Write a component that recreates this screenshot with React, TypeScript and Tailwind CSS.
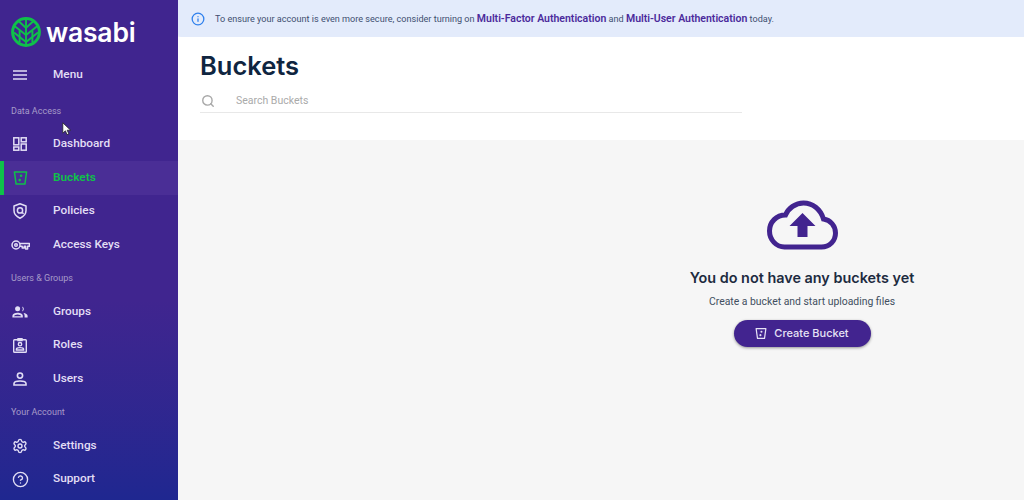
import { HelpCircle, Info, Search, Settings } from "lucide-react";

const sans = "font-['Roboto',sans-serif]";
const display = "font-['Inter',sans-serif]";

function Logo() {
  return (
    <svg viewBox="0 0 30 30" className="h-[30px] w-[30px] shrink-0">
      <circle cx="15" cy="15" r="13.4" fill="none" stroke="#0fc14a" strokeWidth="3" />
      <g fill="none" stroke="#0fc14a" strokeWidth="1.9">
        <path d="M15 3v24" />
        <path d="M8 4.5l7 6.5 7-6.5" />
        <path d="M3.5 9l11.5 9 11.5-9" />
        <path d="M3 15.5l12 9.5 12-9.5" />
        <path d="M8.6 13.5v12M21.4 13.5v12" />
      </g>
    </svg>
  );
}

function BucketIcon({ className }: { className?: string }) {
  return (
    <svg viewBox="0 0 16 16" fill="none" stroke="currentColor" strokeWidth="1.6" className={className}>
      <path d="M1.5 1.5h13l-1.8 13H3.3z" strokeLinejoin="round" />
      <circle cx="8.6" cy="5.6" r="1.4" fill="currentColor" stroke="none" />
      <circle cx="7.2" cy="10.2" r="1.4" fill="currentColor" stroke="none" />
    </svg>
  );
}

function MenuIcon() {
  return (
    <svg viewBox="0 0 14 10" className="h-[10px] w-[14px]" fill="none" stroke="currentColor" strokeWidth="1.4">
      <path d="M0 1h14M0 5h14M0 9h14" />
    </svg>
  );
}

function DashIcon() {
  return (
    <svg viewBox="0 0 14 14" className="h-[14px] w-[14px]" fill="none" stroke="currentColor" strokeWidth="1.5">
      <rect x="0.8" y="0.8" width="5" height="7" />
      <rect x="8.2" y="0.8" width="5" height="4" />
      <rect x="0.8" y="10" width="5" height="3.2" />
      <rect x="8.2" y="7" width="5" height="6.2" />
    </svg>
  );
}

function ShieldIcon() {
  return (
    <svg viewBox="0 0 14 16" className="h-[16px] w-[14px]" fill="none" stroke="currentColor" strokeWidth="1.5">
      <path d="M7 .8l6 2.2v4.6c0 3.6-2.6 6.2-6 7.6-3.4-1.4-6-4-6-7.6V3z" strokeLinejoin="round" />
      <circle cx="7" cy="7.4" r="2.6" />
      <path d="M9 9.4l1.6 1.4" />
    </svg>
  );
}

function KeyIcon() {
  return (
    <svg viewBox="0 0 19 10" className="h-[10px] w-[19px]" fill="none" stroke="currentColor" strokeWidth="1.5">
      <circle cx="5" cy="5" r="4" />
      <circle cx="5" cy="5" r="1.3" />
      <path d="M9 3.6h9.4v2.6h-1.8V9h-2V6.2h-1.4V8h-2V6.2H9" strokeLinejoin="round" />
    </svg>
  );
}

function GroupIcon() {
  return (
    <svg viewBox="0 0 16 12" className="h-[12px] w-[16px]" fill="currentColor">
      <circle cx="5.6" cy="2.8" r="2.5" />
      <path d="M.4 11.6V9.8c0-2 2.6-3 5.2-3s5.2 1 5.2 3v1.8zM2 10.2h7.2c-.3-1-2-1.8-3.6-1.8S2.3 9.2 2 10.2z" fillRule="evenodd" />
      <path d="M10 .4a2.6 2.6 0 0 1 0 5A4.2 4.2 0 0 0 10 .4z" />
      <path d="M11.4 6.9c2.2.3 4.2 1.2 4.2 2.9v1.8h-3V9.8c0-1.2-.5-2.2-1.2-2.9z" />
    </svg>
  );
}

function RoleIcon() {
  return (
    <svg viewBox="0 0 14 15" className="h-[15px] w-[14px]" fill="none" stroke="currentColor" strokeWidth="1.4">
      <rect x="0.7" y="1.8" width="12.6" height="12.5" rx="0.8" />
      <path d="M5 .6h4v2H5z" fill="currentColor" />
      <circle cx="7" cy="6.2" r="1.7" />
      <path d="M3.4 12v-.8c0-1 1.6-1.6 3.6-1.6s3.6.6 3.6 1.6v.8z" />
    </svg>
  );
}

function UserIcon() {
  return (
    <svg viewBox="0 0 14 14" className="h-[14px] w-[14px]" fill="none" stroke="currentColor" strokeWidth="1.6">
      <circle cx="7" cy="3.6" r="2.6" />
      <path d="M1 13v-1.4C1 9.8 3.8 9 7 9s6 .8 6 2.6V13z" />
    </svg>
  );
}

function Cursor() {
  return (
    <svg viewBox="0 0 10 14" className="absolute left-[62px] top-[122px] h-[14px] w-[10px]">
      <path d="M.8.8v10.4l2.6-2.4 1.6 3.8 1.8-.8-1.6-3.6h3.4z" fill="#fff" stroke="#222" strokeWidth="0.8" />
    </svg>
  );
}

function Row({ icon, label, active }: { icon: React.ReactNode; label: string; active?: boolean }) {
  return (
    <div
      className={`flex h-[33.5px] items-center border-l-[4px] text-[11.8px] font-medium ${
        active ? "border-[#0fc14a] bg-[#4a2e96] font-semibold text-[#0fc14a]" : "border-transparent text-[#e2def5]"
      }`}
    >
      <span className="flex w-[49px] justify-center pr-[17px]">{icon}</span>
      <span>{label}</span>
    </div>
  );
}

function Label({ text }: { text: string }) {
  return (
    <div className="flex h-[33.5px] items-center pl-[11px] pt-[1px] text-[9px] text-[#a79cc9]">{text}</div>
  );
}

export default function App() {
  return (
    <div className={`relative flex h-[500px] w-[1024px] overflow-hidden bg-[#f6f6f6] ${sans}`}>
      <aside className="flex w-[178px] shrink-0 flex-col bg-gradient-to-b from-[#40258f] from-60% to-[#1f2790]">
        <div className="flex h-[58.5px] items-center gap-[5px] pl-[11px] pt-[6px]">
          <Logo />
          <span className={`text-[26.5px] font-semibold leading-none tracking-[-0.2px] text-white ${display}`}>wasabi</span>
        </div>
        <Row icon={<MenuIcon />} label="Menu" />
        <div className="h-[2px]" />
        <Label text="Data Access" />
        <Row icon={<DashIcon />} label="Dashboard" />
        <Row icon={<BucketIcon className="h-[16px] w-[15px]" />} label="Buckets" active />
        <Row icon={<ShieldIcon />} label="Policies" />
        <Row icon={<KeyIcon />} label="Access Keys" />
        <Label text="Users & Groups" />
        <Row icon={<GroupIcon />} label="Groups" />
        <Row icon={<RoleIcon />} label="Roles" />
        <Row icon={<UserIcon />} label="Users" />
        <Label text="Your Account" />
        <Row icon={<Settings size={16} strokeWidth={2.1} />} label="Settings" />
        <Row icon={<HelpCircle size={17} strokeWidth={1.9} />} label="Support" />
      </aside>

      <main className="flex min-w-0 flex-1 flex-col">
        <div className="flex h-[37px] items-center gap-[10px] rounded-bl-[3px] bg-[#e3ebfb] pl-[13px] text-[9.1px] text-[#3f4f70]">
          <Info size={14} strokeWidth={2.2} className="text-[#2f80ed]" />
          <p>
            To ensure your account is even more secure, consider turning on{" "}
            <b className="text-[10.5px] font-semibold text-[#4b2a9c]">Multi-Factor Authentication</b> and{" "}
            <b className="text-[10.5px] font-semibold text-[#4b2a9c]">Multi-User Authentication</b> today.
          </p>
        </div>

        <header className="h-[103px] bg-white pl-[22px] pt-[14px]">
          <h1 className={`text-[25.5px] font-semibold leading-[30px] text-[#0f2540] ${display}`}>Buckets</h1>
          <div className="mt-[8px] flex h-[24px] w-[542px] items-center border-b border-[#e8e8e8] text-[10.5px] text-[#aaaaaa]">
            <Search size={14} strokeWidth={2.4} className="ml-[1px] text-[#a8a8a8]" />
            <span className="ml-[21px]">Search Buckets</span>
          </div>
        </header>

        <section className="flex flex-1 flex-col items-center pl-[402px] pt-[60px]">
          <svg viewBox="0 0 72 50" className="h-[50px] w-[73px]" fill="none">
            <path
              d="M18 47h37c8 0 14-6 14-14 0-7-5-13-12-14C54 9 46 3 37 3c-8 0-15 5-18 12C10 15 3 22 3 31c0 9 7 16 15 16z"
              stroke="#42248f"
              strokeWidth="5"
            />
            <path d="M36 13l13 13h-8v11H31V26h-8z" fill="#42248f" />
          </svg>
          <h2 className={`mt-[19px] text-[14.4px] font-semibold leading-[18px] text-[#1d2b3f] ${display}`}>
            You do not have any buckets yet
          </h2>
          <p className="mt-[8px] text-[10.4px] leading-[14px] text-[#3f4f60]">Create a bucket and start uploading files</p>
          <button className="mt-[11px] flex h-[27px] w-[137px] items-center justify-center gap-[7px] rounded-full bg-[#42248f] text-[11px] font-medium text-[#e6e2f5] shadow-[0_1px_3px_rgba(0,0,0,0.4)]">
            <BucketIcon className="h-[13px] w-[12px]" />
            <span className={display}>Create Bucket</span>
          </button>
        </section>
      </main>

      <Cursor />
    </div>
  );
}
